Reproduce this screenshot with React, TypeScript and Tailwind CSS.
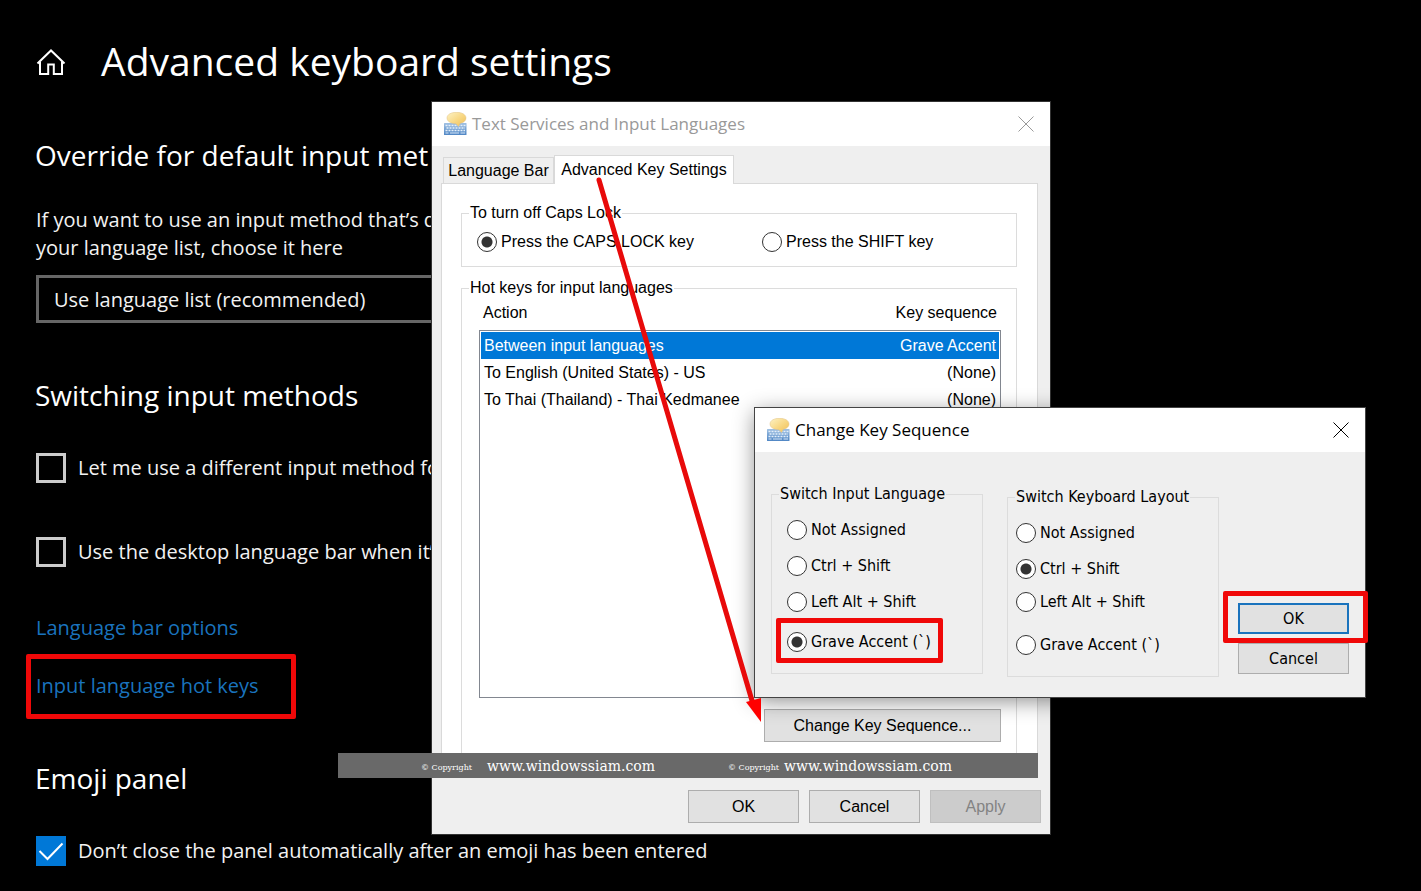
import { useState } from 'react';
import type { ReactNode } from 'react';
import clsx from 'clsx';

const hotKeys = [
  { action: 'Between input languages', keys: 'Grave Accent' },
  { action: 'To English (United States) - US', keys: '(None)' },
  { action: 'To Thai (Thailand) - Thai Kedmanee', keys: '(None)' },
];

function HomeIcon() {
  return (
    <svg className="w-8 h-8" viewBox="0 -2 32 32" fill="none" stroke="white" strokeWidth="2">
      <path d="M2.5 16.5 16 3.5l13.5 13" />
      <path d="M5 14.5V27h8.2V17.6h5.6V27H27V14.5" />
    </svg>
  );
}

function KeyboardIcon() {
  return (
    <svg className="w-6 h-6 shrink-0" viewBox="0 0 24 24">
      <defs>
        <linearGradient id="bubble" x1="0" y1="0" x2="1" y2="1">
          <stop offset="0" stopColor="#fdf2c4" />
          <stop offset="0.5" stopColor="#f8d987" />
          <stop offset="1" stopColor="#efbf55" />
        </linearGradient>
        <linearGradient id="board" x1="0" y1="0" x2="0" y2="1">
          <stop offset="0" stopColor="#9fc0e2" />
          <stop offset="1" stopColor="#4f86c4" />
        </linearGradient>
      </defs>
      <rect x="0" y="11" width="22.500" height="12" rx="0.500" fill="url(#board)" />
      <path d="M1.5 13.500h20" stroke="#e4effa" strokeWidth="1.500" strokeDasharray="2 1" />
      <path d="M2.500 16h18.500" stroke="#e4effa" strokeWidth="1.500" strokeDasharray="2 1" />
      <path d="M1.5 18.500h19.500" stroke="#e4effa" strokeWidth="1.500" strokeDasharray="2 1" />
      <path d="M1.5 21h3M6 21h9M16.500 21h4.500" stroke="#d3e4f6" strokeWidth="1.200" />
      <path
        d="M12.500 0.300c5.500 0 9.500 2.300 9.500 5.700 0 2.800-2.600 4.800-6 5.400L14.500 14.500 12 11.700C6.800 11.600 3 9.400 3 6 3 2.600 7 .3 12.500.3z"
        fill="url(#bubble)"
        stroke="#e0c184"
        strokeWidth="0.5"
      />
    </svg>
  );
}

function CloseIcon() {
  return (
    <svg className="w-4 h-4" viewBox="0 0 16 16" fill="none" stroke="currentColor">
      <path d="M0.500 0.500l15 15M15.500 0.500l-15 15" />
    </svg>
  );
}

function TitleBar({ title, inactive }: { title: string; inactive?: boolean }) {
  return (
    <div
      className={clsx(
        'flex items-center h-11 pl-3 pr-4 bg-white text-[17px] font-["Open_Sans",sans-serif]',
        inactive ? 'text-[#999999]' : 'text-black'
      )}
    >
      <KeyboardIcon />
      <h2 className="ml-1 flex-1">{title}</h2>
      <button type="button" aria-label={'Close ' + title}>
        <CloseIcon />
      </button>
    </div>
  );
}

function SettingCheckbox({ label, checked }: { label: string; checked?: boolean }) {
  const [on, setOn] = useState(!!checked);
  return (
    <label className="flex items-center gap-3 h-[30px] whitespace-nowrap">
      <span className="relative w-[30px] h-[30px] shrink-0">
        <input
          type="checkbox"
          checked={on}
          onChange={(e) => setOn(e.target.checked)}
          className="block appearance-none w-full h-full border-3 border-[#cccccc] checked:border-[#0078d7] checked:bg-[#0078d7]"
        />
        {on && (
          <svg
            className="absolute inset-0 pointer-events-none"
            viewBox="0 0 30 30"
            fill="none"
            stroke="white"
            strokeWidth="2"
          >
            <path d="M3.500 15l8 8L26.500 7.500" />
          </svg>
        )}
      </span>
      {label}
    </label>
  );
}

function Radio({ name, label, checked }: { name: string; label: string; checked?: boolean }) {
  return (
    <label className="flex items-center gap-1 h-5 whitespace-nowrap">
      <input
        type="radio"
        name={name}
        defaultChecked={checked}
        className="appearance-none w-5 h-5 rounded-full border border-[#333333] bg-white checked:bg-[radial-gradient(circle,#333333_5px,transparent_6px)]"
      />
      {label}
    </label>
  );
}

function PushButton({ children, className, disabled }: { children: ReactNode; className?: string; disabled?: boolean }) {
  return (
    <button
      type="button"
      disabled={disabled}
      className={clsx(
        'border',
        disabled ? 'bg-[#cccccc] border-[#bfbfbf] text-[#838383]' : 'bg-[#e1e1e1]',
        className
      )}
    >
      {children}
    </button>
  );
}

// Red marker frame laid over whatever it points out
function Highlight({ className }: { className: string }) {
  return <div className={clsx('absolute border-5 border-[#f00808] rounded-xs pointer-events-none', className)} />;
}

function SectionTitle({ children }: { children: ReactNode }) {
  return <h2 className="-ml-px text-[28px] leading-10 text-white">{children}</h2>;
}

function Settings() {
  return (
    <main className="pl-9 text-xl leading-7 text-[#f2f2f2] whitespace-nowrap">
      <header className="flex items-center h-[60px] mt-[31px] mb-11 gap-[34px]">
        <a href="#home" aria-label="Home" className="-ml-px">
          <HomeIcon />
        </a>
        <h1 className="text-[39px] text-white">Advanced keyboard settings</h1>
      </header>

      <SectionTitle>Override for default input met</SectionTitle>
      <p className="mt-[31px]">
        If you want to use an input method that’s d
        <br />
        your language list, choose it here
      </p>
      <select
        aria-label="Override for default input method"
        className="block appearance-none mt-[13px] mb-[52px] w-[480px] h-12 px-[15px] pt-px border-3 border-[#666666] bg-black"
      >
        <option>Use language list (recommended)</option>
      </select>

      <SectionTitle>Switching input methods</SectionTitle>
      <div className="flex flex-col gap-[54px] mt-[38px]">
        <SettingCheckbox label="Let me use a different input method fo" />
        <SettingCheckbox label="Use the desktop language bar when it’" />
      </div>

      <div className="flex flex-col items-start gap-[30px] mt-[47px] mb-[58px] text-[#1a73bd]">
        <a href="#language-bar">Language bar options</a>
        <div className="relative">
          <a href="#hot-keys">Input language hot keys</a>
          <Highlight className="-left-[10px] -top-[18px] w-[270px] h-[65px]" />
        </div>
      </div>

      <SectionTitle>Emoji panel</SectionTitle>
      <div className="mt-[38px]">
        <SettingCheckbox checked label="Don’t close the panel automatically after an emoji has been entered" />
      </div>
    </main>
  );
}

function TextServicesDialog() {
  return (
    <section className='absolute left-[432px] top-[102px] w-[618px] bg-[#efefef] outline outline-[#333333] text-base leading-5 text-black font-["Liberation_Sans",Arial,sans-serif]'>
      <TitleBar title="Text Services and Input Languages" inactive />

      <div className="pl-[9px] pr-3 pt-[9px] pb-[11px]">
        <div className="flex items-end relative z-10" role="tablist">
          <button
            type="button"
            role="tab"
            className="ml-0.5 h-[26px] w-[111px] border border-b-0 border-[#d9d9d9]"
          >
            Language Bar
          </button>
          <button
            type="button"
            role="tab"
            aria-selected
            className="-mb-px h-[29px] w-[180px] border border-b-0 border-[#d9d9d9] bg-white"
          >
            Advanced Key Settings
          </button>
        </div>

        <div className="border border-[#d9d9d9] bg-white h-[595px] pl-[19px] pr-5 pt-[19px]">
          <fieldset className="flex border border-[#dcdcdc] h-[64px] pl-[15px] pt-[9px]">
            <legend className="-ml-2 px-px">To turn off Caps Lock</legend>
            <div className="w-[285px]">
              <Radio name="caps" label="Press the CAPS LOCK key" checked />
            </div>
            <Radio name="caps" label="Press the SHIFT key" />
          </fieldset>

          <fieldset className="mt-[11px] border border-[#dcdcdc] h-[488px] pl-[17px] pr-[15px]">
            <legend className="-ml-[10px] px-px">Hot keys for input languages</legend>
            <table className="block mt-[5px]">
              <thead className="block">
                <tr className="flex justify-between px-1 mb-[7px]">
                  <th className="font-normal">Action</th>
                  <th className="font-normal">Key sequence</th>
                </tr>
              </thead>
              <tbody className="block h-[368px] p-px border border-[#828790]">
                {hotKeys.map((row, i) => (
                  <tr
                    key={row.action}
                    className={clsx('flex justify-between items-center h-[27px] px-[3px]', i === 0 && 'bg-[#0078d7] text-white')}
                  >
                    <td>{row.action}</td>
                    <td>{row.keys}</td>
                  </tr>
                ))}
              </tbody>
            </table>
            <div className="flex justify-end mt-[11px]">
              <PushButton className="w-[237px] h-[33px] border-[#adadad]">Change Key Sequence...</PushButton>
            </div>
          </fieldset>
        </div>

        <div className="flex justify-end gap-[10px] mt-3 -mr-[3px]">
          <PushButton className="w-[111px] h-[33px] border-[#adadad]">OK</PushButton>
          <PushButton className="w-[111px] h-[33px] border-[#adadad]">Cancel</PushButton>
          <PushButton className="w-[111px] h-[33px]" disabled>
            Apply
          </PushButton>
        </div>
      </div>

      {/* pointer from the active tab down to the change button */}
      <svg className="absolute left-0 top-0 z-20 w-[618px] h-[732px] pointer-events-none" viewBox="0 0 618 732">
        <path d="M167 78L321 602" stroke="#e80a0a" strokeWidth="5" strokeLinecap="round" />
        <path d="M314 600l15-4v24z" fill="#ff0000" />
      </svg>
    </section>
  );
}

function Watermark() {
  return (
    <div className='absolute left-[338px] top-[753px] flex items-center w-[700px] h-[25px] pl-[83px] bg-[#696969] text-white font-["DejaVu_Serif",serif]'>
      <span className="w-[66px] text-[8px] pt-1">© Copyright</span>
      <span className="w-[241px] text-sm">www.windowssiam.com</span>
      <span className="w-14 text-[8px] pt-1">© Copyright</span>
      <span className="text-sm">www.windowssiam.com</span>
    </div>
  );
}

function ChangeKeyDialog() {
  return (
    <section className='absolute left-[755px] top-[408px] w-[610px] h-[289px] bg-[#efefef] outline outline-[#444444] shadow-[0_4px_20px_rgba(0,0,0,0.45)] text-base leading-5 text-black font-["DejaVu_Sans_Condensed","Noto_Sans",sans-serif]'>
      <TitleBar title="Change Key Sequence" />

      <div className="flex px-4 pt-8">
        <fieldset className="w-[212px] h-[190px] border border-[#dcdcdc] pl-[15px]">
          <legend className="-ml-2 px-px">Switch Input Language</legend>
          <div className="flex flex-col gap-4 pt-4">
            <Radio name="language" label="Not Assigned" />
            <Radio name="language" label="Ctrl + Shift" />
            <Radio name="language" label="Left Alt + Shift" />
            <div className="relative mt-1">
              <Radio name="language" label="Grave Accent (`)" checked />
              <Highlight className="-left-[11px] -top-[14px] w-[167px] h-[45px]" />
            </div>
          </div>
        </fieldset>

        <fieldset className="w-[212px] h-[190px] ml-6 mt-[3px] border border-[#dcdcdc] pl-2">
          <legend className="-ml-px px-px">Switch Keyboard Layout</legend>
          <div className="flex flex-col gap-4 pt-4">
            <Radio name="layout" label="Not Assigned" />
            <Radio name="layout" label="Ctrl + Shift" checked />
            <div className="-mt-[3px] mb-[3px]">
              <Radio name="layout" label="Left Alt + Shift" />
            </div>
            <div className="mt-1">
              <Radio name="layout" label="Grave Accent (`)" />
            </div>
          </div>
        </fieldset>

        <div className="flex flex-col ml-auto gap-[9px] pt-[119px]">
          <div className="relative">
            <PushButton className="w-[111px] h-[31px] border-2 border-[#1a73bd]">OK</PushButton>
            <Highlight className="-left-[15px] -top-3 w-[145px] h-[52px]" />
          </div>
          <PushButton className="w-[111px] h-[31px] border-[#adadad]">Cancel</PushButton>
        </div>
      </div>
    </section>
  );
}

export default function App() {
  return (
    <div className='relative flow-root min-h-screen overflow-hidden bg-black font-["Open_Sans",sans-serif]'>
      <Settings />
      <TextServicesDialog />
      <Watermark />
      <ChangeKeyDialog />
    </div>
  );
}
